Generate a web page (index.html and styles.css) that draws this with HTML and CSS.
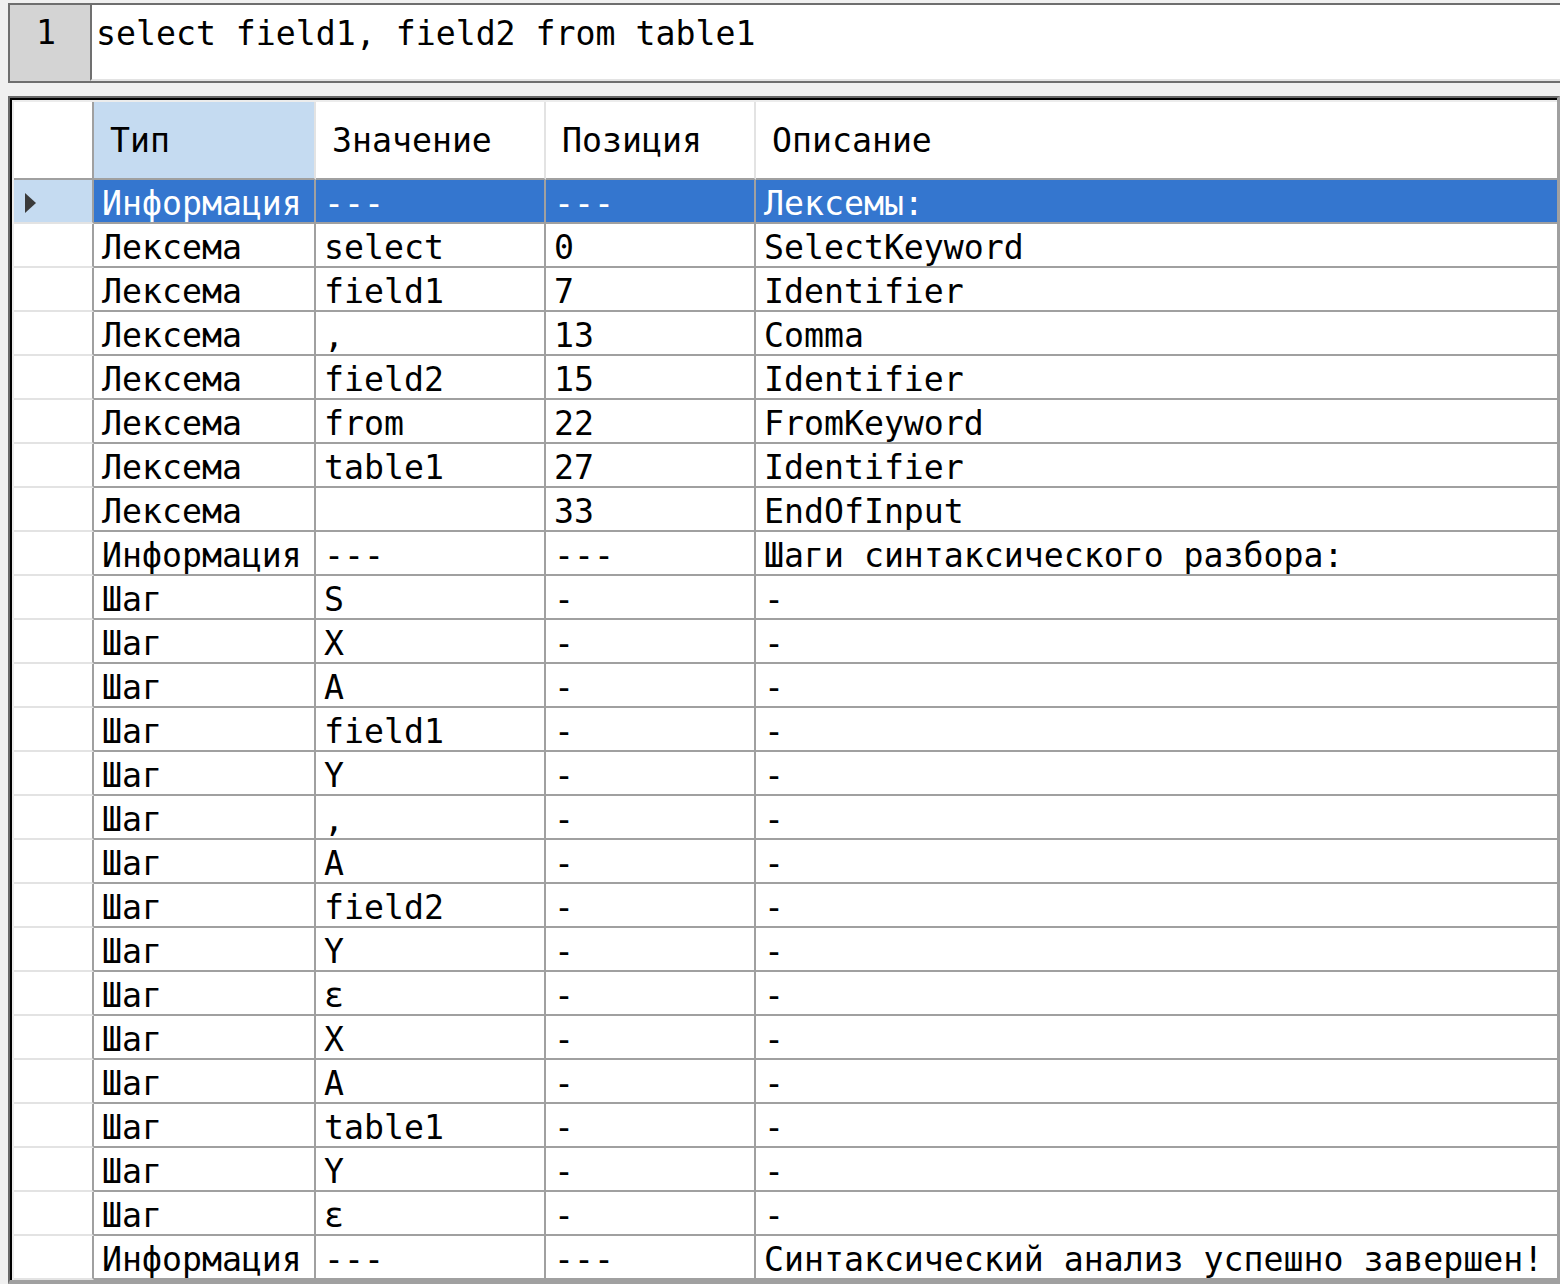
FILE: index.html
```html
<!DOCTYPE html>
<html lang="ru">
<head>
<meta charset="utf-8">
<title>Анализатор</title>
<link rel="stylesheet" href="styles.css">
</head>
<body>
<div class="editor">
  <div class="gutter">1</div>
  <div class="code">select field1, field2 from table1</div>
</div>
<div class="grid">
  <table class="tbl">
    <colgroup>
      <col class="c-rh"><col class="c-type"><col class="c-val"><col class="c-pos"><col class="c-desc">
    </colgroup>
    <thead>
      <tr>
        <th class="rh"></th>
        <th class="hsel">Тип</th>
        <th>Значение</th>
        <th>Позиция</th>
        <th class="last">Описание</th>
      </tr>
    </thead>
    <tbody>
      <tr class="sel"><td class="rh"><svg class="arrow" width="12" height="20" viewBox="0 0 12 20"><path d="M0 0 L11 10 L0 20 Z" fill="#3a3a3a"/></svg></td><td>Информация</td><td>---</td><td>---</td><td class="last">Лексемы:</td></tr>
      <tr><td class="rh"></td><td>Лексема</td><td>select</td><td>0</td><td class="last">SelectKeyword</td></tr>
      <tr><td class="rh"></td><td>Лексема</td><td>field1</td><td>7</td><td class="last">Identifier</td></tr>
      <tr><td class="rh"></td><td>Лексема</td><td>,</td><td>13</td><td class="last">Comma</td></tr>
      <tr><td class="rh"></td><td>Лексема</td><td>field2</td><td>15</td><td class="last">Identifier</td></tr>
      <tr><td class="rh"></td><td>Лексема</td><td>from</td><td>22</td><td class="last">FromKeyword</td></tr>
      <tr><td class="rh"></td><td>Лексема</td><td>table1</td><td>27</td><td class="last">Identifier</td></tr>
      <tr><td class="rh"></td><td>Лексема</td><td></td><td>33</td><td class="last">EndOfInput</td></tr>
      <tr><td class="rh"></td><td>Информация</td><td>---</td><td>---</td><td class="last">Шаги синтаксического разбора:</td></tr>
      <tr><td class="rh"></td><td>Шаг</td><td>S</td><td>-</td><td class="last">-</td></tr>
      <tr><td class="rh"></td><td>Шаг</td><td>X</td><td>-</td><td class="last">-</td></tr>
      <tr><td class="rh"></td><td>Шаг</td><td>A</td><td>-</td><td class="last">-</td></tr>
      <tr><td class="rh"></td><td>Шаг</td><td>field1</td><td>-</td><td class="last">-</td></tr>
      <tr><td class="rh"></td><td>Шаг</td><td>Y</td><td>-</td><td class="last">-</td></tr>
      <tr><td class="rh"></td><td>Шаг</td><td>,</td><td>-</td><td class="last">-</td></tr>
      <tr><td class="rh"></td><td>Шаг</td><td>A</td><td>-</td><td class="last">-</td></tr>
      <tr><td class="rh"></td><td>Шаг</td><td>field2</td><td>-</td><td class="last">-</td></tr>
      <tr><td class="rh"></td><td>Шаг</td><td>Y</td><td>-</td><td class="last">-</td></tr>
      <tr><td class="rh"></td><td>Шаг</td><td>ε</td><td>-</td><td class="last">-</td></tr>
      <tr><td class="rh"></td><td>Шаг</td><td>X</td><td>-</td><td class="last">-</td></tr>
      <tr><td class="rh"></td><td>Шаг</td><td>A</td><td>-</td><td class="last">-</td></tr>
      <tr><td class="rh"></td><td>Шаг</td><td>table1</td><td>-</td><td class="last">-</td></tr>
      <tr><td class="rh"></td><td>Шаг</td><td>Y</td><td>-</td><td class="last">-</td></tr>
      <tr><td class="rh"></td><td>Шаг</td><td>ε</td><td>-</td><td class="last">-</td></tr>
      <tr><td class="rh"></td><td>Информация</td><td>---</td><td>---</td><td class="last">Синтаксический анализ успешно завершен!</td></tr>
    </tbody>
  </table>
</div>
</body>
</html>
```
FILE: styles.css
```css
html, body {
  margin: 0;
  padding: 0;
  background: #f0f0f0;
  overflow: hidden;
}
body {
  width: 1560px;
  height: 1284px;
  font-family: "DejaVu Sans Mono", "Liberation Mono", monospace;
  font-size: 33.2px;
  color: #000;
}
.editor {
  display: flex;
  margin: 3px 0 0 8px;
  width: 1552px;
  height: 80px;
  box-sizing: border-box;
  border: 2px solid #6e6e6e;
  border-right: none;
  background: #fff;
}
.gutter {
  width: 80px;
  box-sizing: border-box;
  background: #d4d4d4;
  text-align: right;
  padding: 8px 34px 0 0;
  line-height: 40px;
}
.code {
  flex: 1;
  border-left: 2px solid #707070;
  border-bottom: 2px solid #e3e3e3;
  padding: 9px 0 0 4px;
  line-height: 40px;
  white-space: pre;
  background: #fff;
}
.grid {
  margin: 13px 0 0 8px;
  width: 1552px;
  height: 1188px;
  box-sizing: border-box;
  border-top: 2px solid #696969;
  border-left: 2px solid #696969;
  border-right: 3px solid #a0a0a0;
  border-bottom: 4px solid #a0a0a0;
  background: #fff;
  overflow: hidden;
}
.tbl {
  border-top: 2px solid #000;
  border-left: 2px solid #000;
  border-spacing: 0;
  border-collapse: separate;
  table-layout: fixed;
  width: 1547px;
  padding: 2px 0 0 2px;
  background: #ececec;
}
.c-rh { width: 80px; }
.c-type { width: 222px; }
.c-val { width: 230px; }
.c-pos { width: 210px; }
.c-desc { width: 803px; }
th, td {
  padding: 0;
  text-align: left;
  vertical-align: top;
  white-space: pre;
  overflow: hidden;
  font-weight: normal;
}
th {
  background: #fff;
  height: 76px;
  line-height: 74px;
  padding: 2px 0 0 16px;
  box-sizing: border-box;
  border-right: 2px solid #e3e3e3;
  border-bottom: 2px solid #a0a0a0;
}
th.rh {
  padding-left: 0;
  border-right: 2px solid #a0a0a0;
}
th.hsel {
  background: #c5dbf1;
}
td {
  background: #fff;
  line-height: 37px;
  padding: 5px 0 0 8px;
  border-right: 2px solid #a0a0a0;
  border-bottom: 2px solid #a0a0a0;
}
td.rh {
  padding: 0;
  border-bottom: 2px solid #e3e3e3;
}
.last {
  border-right: none;
}
tr.sel td {
  background: #3476cf;
  color: #fff;
}
tr.sel td.rh {
  background: #c5dbf1;
}
.arrow {
  display: block;
  margin: 13px 0 0 11px;
}
```
